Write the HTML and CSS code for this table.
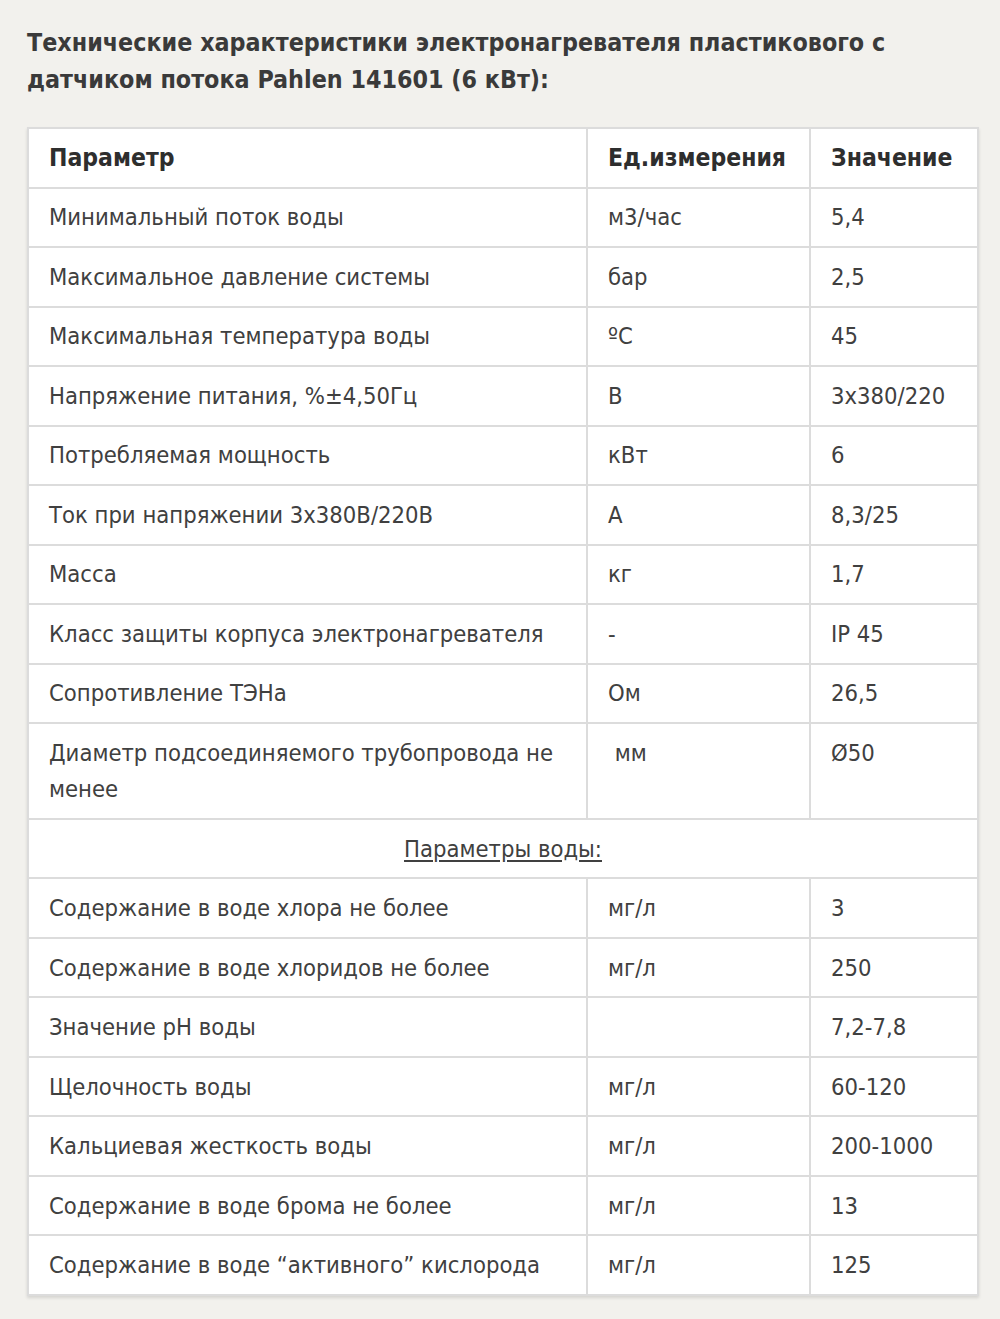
FILE: index.html
```html
<!DOCTYPE html>
<html lang="ru">
<head>
<meta charset="utf-8">
<title>Pahlen 141601</title>
<link rel="stylesheet" href="styles.css">
</head>
<body>
<div class="page">
  <h2 class="title">Технические характеристики электронагревателя пластикового с датчиком потока Pahlen 141601 (6 кВт):</h2>
  <table class="specs">
    <colgroup>
      <col class="c1"><col class="c2"><col class="c3">
    </colgroup>
    <thead>
      <tr><th>Параметр</th><th>Ед.измерения</th><th>Значение</th></tr>
    </thead>
    <tbody>
      <tr><td>Минимальный поток воды</td><td>м3/час</td><td>5,4</td></tr>
      <tr><td>Максимальное давление системы</td><td>бар</td><td>2,5</td></tr>
      <tr><td>Максимальная температура воды</td><td>ºC</td><td>45</td></tr>
      <tr><td>Напряжение питания, %±4,50Гц</td><td>В</td><td>3x380/220</td></tr>
      <tr><td>Потребляемая мощность</td><td>кВт</td><td>6</td></tr>
      <tr><td>Ток при напряжении 3x380В/220В</td><td>А</td><td>8,3/25</td></tr>
      <tr><td>Масса</td><td>кг</td><td>1,7</td></tr>
      <tr><td>Класс защиты корпуса электронагревателя</td><td>-</td><td>IP 45</td></tr>
      <tr><td>Сопротивление ТЭНа</td><td>Ом</td><td>26,5</td></tr>
      <tr class="top"><td>Диаметр подсоединяемого трубопровода не менее</td><td>&nbsp;мм</td><td>Ø50</td></tr>
      <tr><td colspan="3" class="section"><span>Параметры воды:</span></td></tr>
      <tr><td>Содержание в воде хлора не более</td><td>мг/л</td><td>3</td></tr>
      <tr><td>Содержание в воде хлоридов не более</td><td>мг/л</td><td>250</td></tr>
      <tr><td>Значение pH воды</td><td></td><td>7,2-7,8</td></tr>
      <tr><td>Щелочность воды</td><td>мг/л</td><td>60-120</td></tr>
      <tr><td>Кальциевая жесткость воды</td><td>мг/л</td><td>200-1000</td></tr>
      <tr><td>Содержание в воде брома не более</td><td>мг/л</td><td>13</td></tr>
      <tr><td>Содержание в воде “активного” кислорода</td><td>мг/л</td><td>125</td></tr>
    </tbody>
  </table>
</div>
</body>
</html>
```

FILE: styles.css
```css
html, body {
  margin: 0;
  padding: 0;
  background: #f2f1ed;
}
.page {
  padding: 24px 23px 20px 27px;
  font-family: "DejaVu Sans Condensed", "DejaVu Sans", sans-serif;
  color: #404040;
}
.title {
  margin: 0 0 29px 0;
  font-size: 24.8px;
  line-height: 37px;
  font-weight: bold;
  color: #3a3a3a;
  width: 930px;
}
.specs {
  width: 950px;
  border-collapse: collapse;
  background: #fff;
  table-layout: fixed;
  box-shadow: 0 2px 3px rgba(0,0,0,0.12);
  font-size: 23.6px;
  line-height: 36.4px;
}
.c1 { width: 559px; }
.c2 { width: 223px; }
.c3 { width: 168px; }
.specs th, .specs td {
  border: 2px solid #dcdcdc;
  padding: 10.6px 20px 10.5px;
  text-align: left;
  vertical-align: middle;
}
.specs th {
  font-weight: bold;
  font-size: 24.5px;
  color: #2e2e2e;
}
.specs tr.top td {
  vertical-align: top;
}
.specs td.section {
  text-align: center;
}
.specs td.section span {
  text-decoration: underline;
  text-underline-offset: 3px;
}
```
